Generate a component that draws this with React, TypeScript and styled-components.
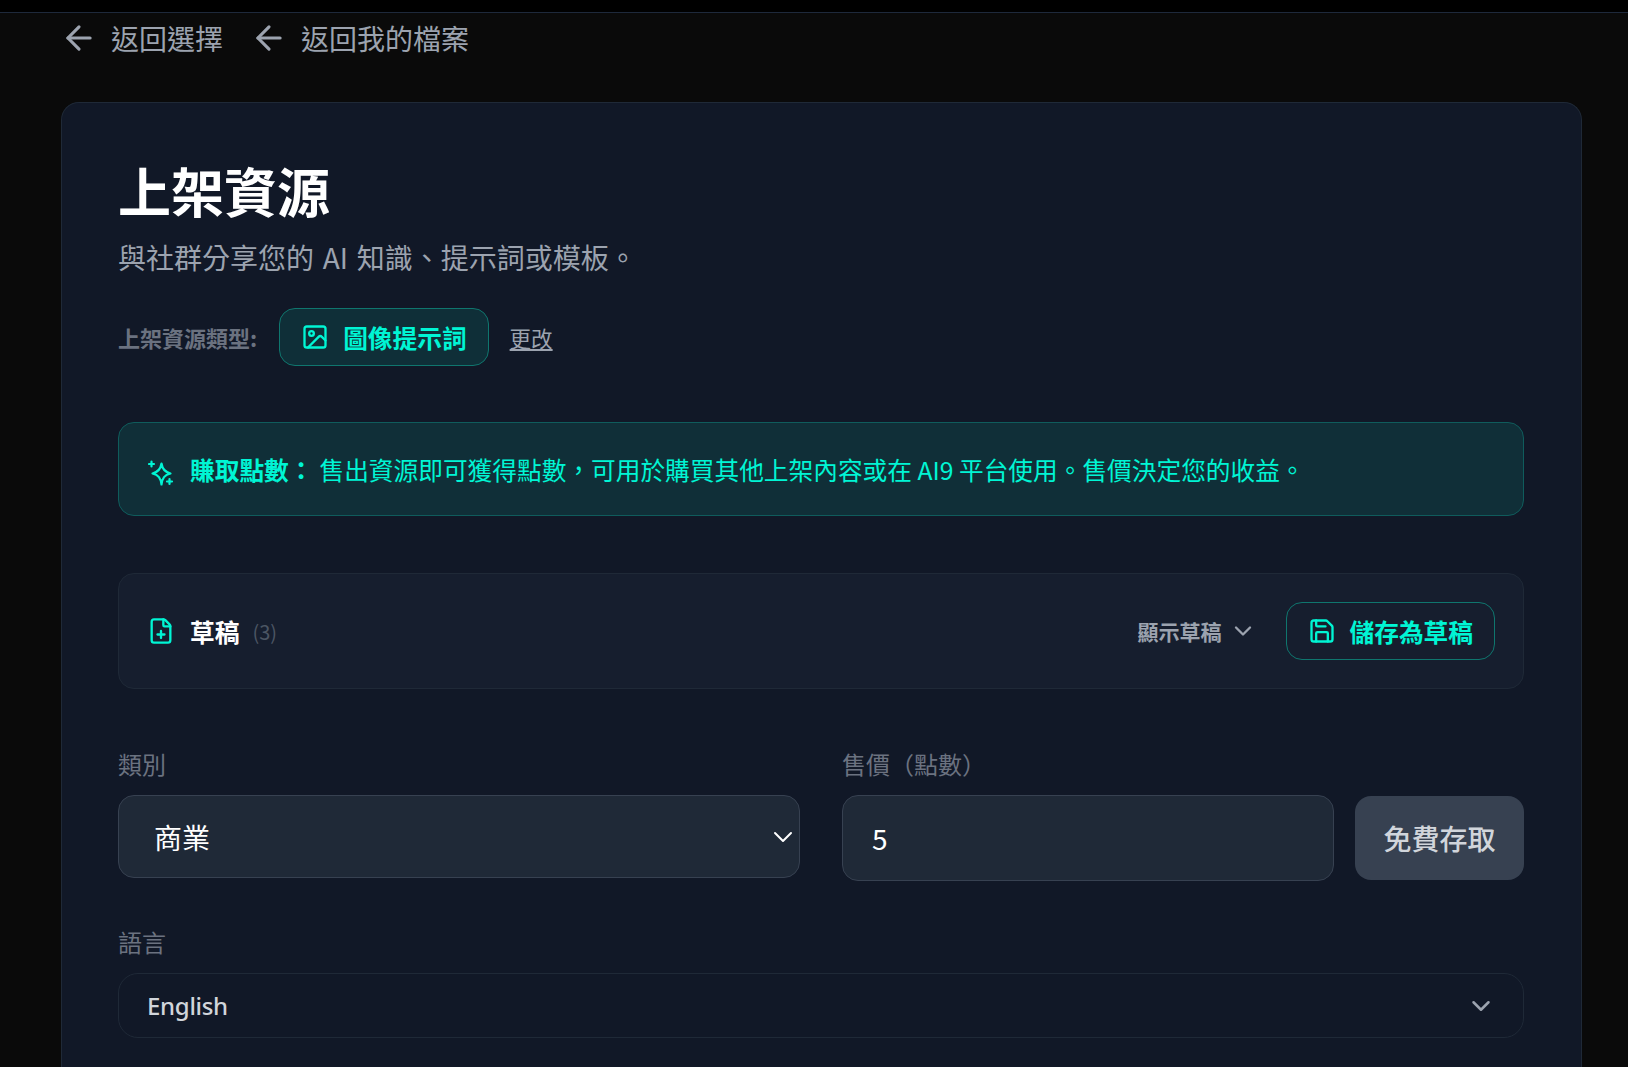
import React from "react";
import styled, { createGlobalStyle } from "styled-components";
import { ArrowLeft, ChevronDown, FilePlus, Image, Save } from "lucide-react";

const GlobalStyle = createGlobalStyle`
  html, body {
    margin: 0;
    background: #0a0a0a;
    height: 1067px;
    overflow: hidden;
  }
  * {
    box-sizing: border-box;
  }
  body {
    font-family: "Noto Sans CJK TC", "Noto Sans", sans-serif;
  }
`;

const TopBar = styled.div`
  height: 13px;
  background: #000;
  border-bottom: 1px solid #1e293b;
`;

const Page = styled.div`
  padding-left: 61px;
  width: 1582px;
`;

const BackRow = styled.nav`
  display: flex;
  gap: 27px;
  height: 49px;
  margin-left: -1px;
  margin-bottom: 40px;
  align-items: center;
`;

const BackLink = styled.a`
  display: flex;
  align-items: center;
  gap: 13px;
  font-size: 28px;
  line-height: 40px;
  color: #9ca3af;
  text-decoration: none;
`;

const Card = styled.main`
  height: 965px;
  padding: 56px 57px 56px 56px;
  background: #111827;
  border: 1px solid #1f2937;
  border-bottom: 0;
  border-radius: 18px 18px 0 0;
`;

const Title = styled.h1`
  margin: 0;
  height: 63px;
  font-size: 53px;
  line-height: 63px;
  font-weight: 700;
  color: #fff;
`;

const Subtitle = styled.p`
  margin: 15px 0 0;
  font-size: 28px;
  line-height: 40px;
  word-spacing: 2.5px;
  color: #9ca3af;
`;

const TypeRow = styled.div`
  display: flex;
  align-items: center;
  margin-top: 31px;
`;

const TypeLabel = styled.span`
  font-size: 22px;
  font-weight: 700;
  color: #6b7280;
  margin-right: 22px;
`;

const TypeBadge = styled.span`
  display: flex;
  align-items: center;
  gap: 14px;
  height: 58px;
  padding: 0 21px;
  font-size: 24.7px;
  font-weight: 700;
  color: #00f5d4;
  background: #0f2f38;
  border: 1px solid #0f766e;
  border-radius: 16px;
`;

const ChangeLink = styled.a`
  margin-left: 21px;
  font-size: 21.5px;
  color: #9ca3af;
  text-decoration: underline;
`;

const Notice = styled.div`
  display: flex;
  align-items: center;
  height: 94px;
  margin-top: 56px;
  padding: 0 29px;
  gap: 15px;
  font-size: 24.7px;
  color: #00f5d4;
  background: #102f38;
  border: 1px solid #0f5c5c;
  border-radius: 16px;
`;

const NoticeText = styled.span`
  white-space: nowrap;
`;

const NoticeStrong = styled.strong`
  font-weight: 700;
  margin-right: 6px;
`;

const SparkIcon = styled.svg`
  flex: none;
  width: 27px;
  height: 27px;
  margin-top: 6px;
  fill: none;
  stroke: currentColor;
  stroke-width: 2.2;
  stroke-linecap: round;
  stroke-linejoin: round;
`;

const DraftPanel = styled.section`
  display: flex;
  align-items: center;
  height: 116px;
  margin-top: 57px;
  padding: 0 28px;
  background: #161e2e;
  border: 1px solid #1f2937;
  border-radius: 16px;
`;

const DraftTitle = styled.span`
  margin-left: 15px;
  font-size: 24.7px;
  font-weight: 700;
  color: #fff;
`;

const DraftCount = styled.span`
  margin-left: 13px;
  font-size: 20px;
  color: #4b5563;
`;

const DraftToggle = styled.button`
  display: flex;
  align-items: center;
  gap: 7px;
  margin-left: auto;
  padding: 0;
  font: inherit;
  font-size: 21px;
  font-weight: 700;
  color: #9ca3af;
  background: none;
  border: 0;
`;

const SaveButton = styled.button`
  display: flex;
  align-items: center;
  gap: 14px;
  height: 58px;
  margin-left: 29px;
  padding: 0 21px;
  font: inherit;
  font-size: 24.7px;
  font-weight: 700;
  color: #00f5d4;
  background: none;
  border: 1px solid #0f766e;
  border-radius: 16px;
`;

const FieldGrid = styled.div`
  display: grid;
  grid-template-columns: 682px 1fr;
  column-gap: 42px;
  margin-top: 56px;
`;

const Label = styled.div`
  height: 50px;
  font-size: 24px;
  line-height: 38px;
  color: #6b7280;
`;

const FilledSelect = styled.div`
  display: flex;
  align-items: center;
  justify-content: space-between;
  height: 83px;
  padding: 0 0 0 35px;
  font-size: 28px;
  color: #fff;
  background: #1f2937;
  border: 1px solid #374151;
  border-radius: 16px;
`;

const PriceRow = styled.div`
  display: flex;
  gap: 21px;
  align-items: center;
`;

const PriceInput = styled.div`
  display: flex;
  align-items: center;
  flex: 1;
  height: 86px;
  padding: 0 29px;
  font-size: 28px;
  color: #fff;
  background: #1f2937;
  border: 1px solid #374151;
  border-radius: 16px;
`;

const FreeButton = styled.button`
  width: 169px;
  height: 84px;
  padding: 0;
  font: inherit;
  font-size: 28px;
  font-weight: 500;
  color: #d1d5db;
  background: #374151;
  border: 0;
  border-radius: 16px;
`;

const LanguageField = styled.div`
  margin-top: 42px;
`;

const LanguageSelect = styled.div`
  display: flex;
  align-items: center;
  justify-content: space-between;
  height: 65px;
  padding: 0 27px 0 28px;
  font-family: "Noto Sans", sans-serif;
  font-size: 24px;
  font-weight: 500;
  letter-spacing: -0.3px;
  color: #d1d5db;
  background: #111827;
  border: 1px solid #1f2937;
  border-radius: 20px;
`;

const App = () => {
  return (
    <>
      <GlobalStyle />
      <TopBar />
      <Page>
        <BackRow>
          <BackLink>
            <ArrowLeft size={38} strokeWidth={2} />
            返回選擇
          </BackLink>
          <BackLink>
            <ArrowLeft size={38} strokeWidth={2} />
            返回我的檔案
          </BackLink>
        </BackRow>
        <Card>
          <Title>上架資源</Title>
          <Subtitle>與社群分享您的 AI 知識、提示詞或模板。</Subtitle>
          <TypeRow>
            <TypeLabel>上架資源類型:</TypeLabel>
            <TypeBadge>
              <Image size={28} />
              圖像提示詞
            </TypeBadge>
            <ChangeLink>更改</ChangeLink>
          </TypeRow>
          <Notice>
            <SparkIcon viewBox="0 0 27 27">
              <path d="M13.5 4.5 C14.3 10 16.5 13 22.5 14.5 C16.5 16 14.3 19 13.5 25.5 C12.7 19 10.5 16 4.5 14.5 C10.5 13 12.7 10 13.5 4.5 Z" />
              <path d="M3.5 2.5 V7.5 M1 5 H6" />
              <path d="M21.5 20 V25 M19 22.5 H24" />
            </SparkIcon>
            <NoticeText>
              <NoticeStrong>賺取點數：</NoticeStrong>
              售出資源即可獲得點數，可用於購買其他上架內容或在 AI9 平台使用。售價決定您的收益。
            </NoticeText>
          </Notice>
          <DraftPanel>
            <FilePlus size={28} color="#00f5d4" />
            <DraftTitle>草稿</DraftTitle>
            <DraftCount>(3)</DraftCount>
            <DraftToggle>
              顯示草稿
              <ChevronDown size={28} />
            </DraftToggle>
            <SaveButton>
              <Save size={28} />
              儲存為草稿
            </SaveButton>
          </DraftPanel>
          <FieldGrid>
            <div>
              <Label>類別</Label>
              <FilledSelect>
                商業
                <ChevronDown size={32} strokeWidth={1.5} />
              </FilledSelect>
            </div>
            <div>
              <Label>售價（點數）</Label>
              <PriceRow>
                <PriceInput>5</PriceInput>
                <FreeButton>免費存取</FreeButton>
              </PriceRow>
            </div>
          </FieldGrid>
          <LanguageField>
            <Label>語言</Label>
            <LanguageSelect>
              English
              <ChevronDown size={30} strokeWidth={2} color="#9ca3af" />
            </LanguageSelect>
          </LanguageField>
        </Card>
      </Page>
    </>
  );
};

export default App;
